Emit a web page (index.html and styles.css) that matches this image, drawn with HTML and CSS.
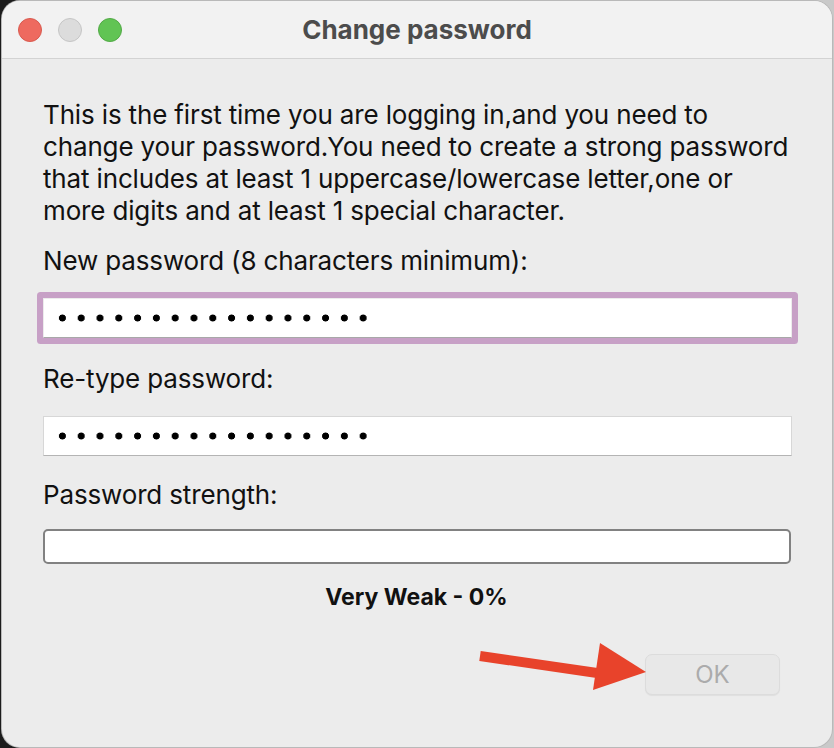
FILE: index.html
```html
<!DOCTYPE html>
<html lang="en">
<head>
  <meta charset="UTF-8">
  <title>Change password</title>
  <meta name="viewport" content="width=device-width, initial-scale=1.0">
  <link rel="stylesheet" href="styles.css">
</head>
<body>
  <div class="window">
    <div class="titlebar">
      <div class="lights">
        <span class="light red"></span>
        <span class="light gray"></span>
        <span class="light green"></span>
      </div>
      <h1>Change password</h1>
    </div>
    <div class="content">
      <p class="intro">This is the first time you are logging in,and you need to<br>change your password.You need to create a strong password<br>that includes at least 1 uppercase/lowercase letter,one or<br>more digits and at least 1 special character.</p>

      <label class="field-label">New password (8 characters minimum):</label>
      <div class="field focused"><div class="dots"></div></div>

      <label class="field-label second">Re-type password:</label>
      <div class="field"><div class="dots"></div></div>

      <label class="field-label third">Password strength:</label>
      <div class="strength-bar"></div>
      <div class="strength-text">Very Weak - 0%</div>

      <div class="actions">
        <button class="ok-btn" disabled>OK</button>
      </div>
    </div>

    <!-- annotation arrow -->
    <svg class="arrow" width="200" height="70" viewBox="0 0 200 70">
      <line x1="4" y1="20" x2="128" y2="38" stroke="#e8432b" stroke-width="10"/>
      <polygon points="124,7 170,36 117,54" fill="#e8432b"/>
    </svg>
  </div>
</body>
</html>
```

FILE: styles.css
```css
body {
  margin: 0;
  width: 834px;
  height: 748px;
  overflow: hidden;
  background: linear-gradient(90deg, #1c1c1c 0, #1c1c1c 50%, #c9c9c9 50%, #c9c9c9 100%);
  font-family: Inter, 'Noto Sans', sans-serif;
}
.window {
  position: relative;
  margin: 1px 0 0 2px;
  width: 830px;
  height: 746px;
  background: #ececec;
  border-radius: 18px;
  overflow: hidden;
  box-shadow: 0 0 0 1px #b9b9b9;
}
.titlebar {
  position: relative;
  height: 57px;
  background: #f2f2f2;
  border-bottom: 1px solid #d3d3d3;
  display: flex;
  align-items: center;
  justify-content: center;
}
.titlebar h1 {
  margin: 0;
  font-size: 26px;
  font-weight: 700;
  color: #4c4c4c;
}
.lights {
  position: absolute;
  left: 16px;
  top: 17px;
  display: flex;
  gap: 16px;
}
.light {
  width: 22px;
  height: 22px;
  border-radius: 50%;
  border: 1px solid;
}
.light.red { background: #ee6a5f; border-color: #d85a4f; }
.light.gray { background: #dcdcdc; border-color: #c5c5c5; }
.light.green { background: #61c454; border-color: #52a946; }
.content {
  padding: 40px 40px 0 41px;
  color: #111;
}
.intro {
  margin: 0;
  font-size: 26px;
  line-height: 32px;
  white-space: nowrap;
  letter-spacing: -0.15px;
}
.field-label {
  display: block;
  margin-top: 18px;
  font-size: 26px;
  line-height: 32px;
  letter-spacing: -0.15px;
}
.field-label.second { margin-top: 25px; }
.field-label.third { margin-top: 23px; }
.field {
  margin-top: 21px;
  height: 40px;
  background: #fff;
  border: 1px solid #d7d7d7;
  border-bottom-color: #b4b4b4;
  box-sizing: border-box;
  display: flex;
  align-items: center;
}
.field.focused {
  border-color: #ececec;
  border-bottom-color: #a8a8a8;
  box-shadow: 0 0 0 6px #c7a0c6;
  border-radius: 1px;
}
.dots {
  margin-left: 9px;
  width: 320px;
  height: 10px;
  background-image: radial-gradient(circle, #000 3.2px, transparent 3.8px);
  background-size: 18.8px 10px;
}
.strength-bar {
  margin-top: 18px;
  height: 35px;
  width: 748px;
  box-sizing: border-box;
  background: #fff;
  border: 2px solid #818181;
  border-radius: 5px;
}
.strength-text {
  margin-top: 19px;
  text-align: center;
  font-size: 23px;
  line-height: 28px;
  font-weight: 700;
  color: #111;
  padding-right: 2px;
}
.actions {
  display: flex;
  justify-content: flex-end;
  margin-top: 43px;
  padding-right: 12px;
}
.ok-btn {
  width: 135px;
  height: 41px;
  background: #e8e8e8;
  border: 1px solid #dcdcdc;
  border-radius: 7px;
  box-shadow: 0 1px 1px rgba(0,0,0,0.06);
  font-family: Inter, 'Noto Sans', sans-serif;
  font-size: 24px;
  color: #ababab;
}
.arrow {
  position: absolute;
  left: 474px;
  top: 635px;
}
```
